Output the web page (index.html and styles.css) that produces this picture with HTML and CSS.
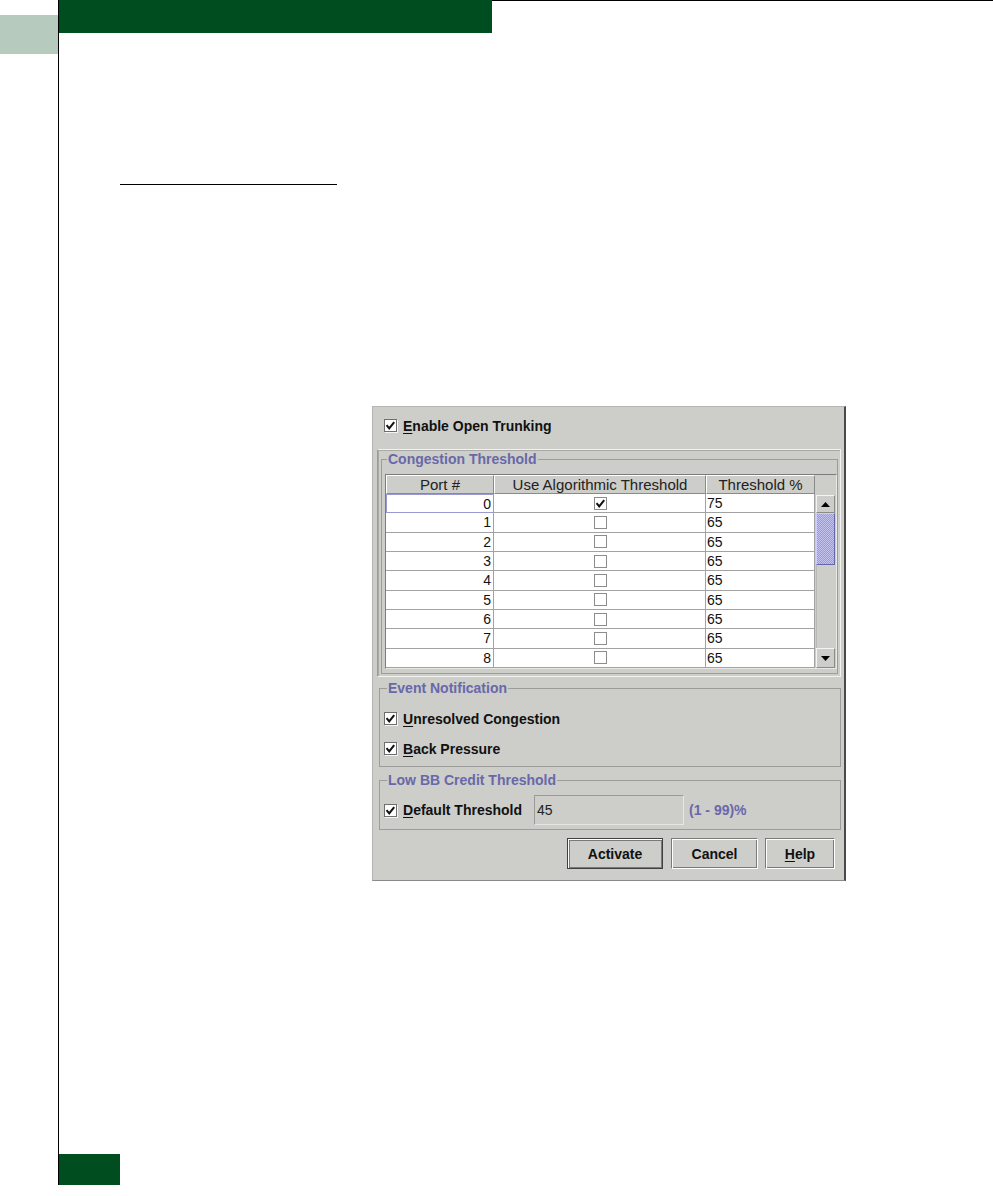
FILE: index.html
```html
<!DOCTYPE html>
<html>
<head>
<meta charset="utf-8">
<title>Open Trunking</title>
<link rel="stylesheet" href="styles.css">
</head>
<body>
<div class="page">
  <div class="gutter"><div class="tab"></div></div>
  <div class="main">
    <div class="top">
      <div class="greenbar"></div>
      <div class="toprule"></div>
    </div>
    <div class="heading-rule"></div>

    <div class="dlg">
      <div class="enable-row">
        <span class="cb"><svg viewBox="0 0 11 11" class="chk"><path d="M2.2 6 L4.2 8.4 L8.6 2.8"/></svg></span>
        <span class="lbl"><u>E</u>nable Open Trunking</span>
      </div>

      <div class="cong-panel">
        <fieldset class="grp cong">
          <legend>Congestion Threshold</legend>
          <div class="pane">
            <div class="thead">
              <div class="th c1">Port #</div>
              <div class="th c2">Use Algorithmic Threshold</div>
              <div class="th c3">Threshold %</div>
              <div class="th-fill"></div>
            </div>
            <div class="tbody-wrap">
              <div class="tbody">
                <div class="tr"><div class="td c1 num focus">0</div><div class="td c2 mid"><span class="cb small"><svg viewBox="0 0 11 11" class="chk"><path d="M2.2 6 L4.2 8.4 L8.6 2.8"/></svg></span></div><div class="td c3">75</div></div>
                <div class="tr"><div class="td c1 num">1</div><div class="td c2 mid"><span class="cb small"></span></div><div class="td c3">65</div></div>
                <div class="tr"><div class="td c1 num">2</div><div class="td c2 mid"><span class="cb small"></span></div><div class="td c3">65</div></div>
                <div class="tr"><div class="td c1 num">3</div><div class="td c2 mid"><span class="cb small"></span></div><div class="td c3">65</div></div>
                <div class="tr"><div class="td c1 num">4</div><div class="td c2 mid"><span class="cb small"></span></div><div class="td c3">65</div></div>
                <div class="tr"><div class="td c1 num">5</div><div class="td c2 mid"><span class="cb small"></span></div><div class="td c3">65</div></div>
                <div class="tr"><div class="td c1 num">6</div><div class="td c2 mid"><span class="cb small"></span></div><div class="td c3">65</div></div>
                <div class="tr"><div class="td c1 num">7</div><div class="td c2 mid"><span class="cb small"></span></div><div class="td c3">65</div></div>
                <div class="tr"><div class="td c1 num">8</div><div class="td c2 mid"><span class="cb small"></span></div><div class="td c3">65</div></div>
              </div>
              <div class="sbar">
                <div class="sbtn"><svg viewBox="0 0 9 5" class="arr"><polygon points="0,5 9,5 4.5,0"/></svg></div>
                <div class="thumb"></div>
                <div class="track"></div>
                <div class="sbtn down"><svg viewBox="0 0 9 5" class="arr"><polygon points="0,0 9,0 4.5,5"/></svg></div>
              </div>
            </div>
          </div>
        </fieldset>
      </div>

      <fieldset class="grp event">
        <legend>Event Notification</legend>
        <div class="check-row">
          <span class="cb"><svg viewBox="0 0 11 11" class="chk"><path d="M2.2 6 L4.2 8.4 L8.6 2.8"/></svg></span>
          <span class="lbl"><u>U</u>nresolved Congestion</span>
        </div>
        <div class="check-row second">
          <span class="cb"><svg viewBox="0 0 11 11" class="chk"><path d="M2.2 6 L4.2 8.4 L8.6 2.8"/></svg></span>
          <span class="lbl"><u>B</u>ack Pressure</span>
        </div>
      </fieldset>

      <fieldset class="grp lowbb">
        <legend>Low BB Credit Threshold</legend>
        <div class="bb-row">
          <span class="cb"><svg viewBox="0 0 11 11" class="chk"><path d="M2.2 6 L4.2 8.4 L8.6 2.8"/></svg></span>
          <span class="lbl"><u>D</u>efault Threshold</span>
          <div class="field">45</div>
          <span class="range">(1 - 99)%</span>
        </div>
      </fieldset>

      <div class="buttons">
        <div class="btn default">Activate</div>
        <div class="btn cancel">Cancel</div>
        <div class="btn help"><u>H</u>elp</div>
      </div>
    </div>

    <div class="foot-block"></div>
  </div>
</div>
</body>
</html>
```

FILE: styles.css
```css
* { box-sizing: border-box; }

html, body {
  margin: 0;
  padding: 0;
  background: #ffffff;
}

body {
  font-family: "Liberation Sans", Arial, sans-serif;
  color: #111;
}

.page {
  display: flex;
  width: 993px;
  height: 1196px;
}

.gutter {
  width: 58px;
  flex: none;
}

.tab {
  margin-top: 15px;
  height: 39px;
  background: #b6cbbe;
}

.main {
  width: 935px;
  height: 1185px;
  border-left: 1px solid #000;
  display: flex;
  flex-direction: column;
}

.top {
  display: flex;
  height: 33px;
  flex: none;
}

.greenbar {
  width: 433px;
  background: #004d20;
}

.toprule {
  flex: 1;
  border-top: 1px solid #000;
}

.heading-rule {
  margin: 151px 0 0 61px;
  width: 217px;
  height: 1px;
  background: #000;
  flex: none;
}

/* ---------- dialog ---------- */
.dlg {
  margin: 221px 0 0 313px;
  width: 474px;
  height: 475px;
  flex: none;
  background: #cdcdc9;
  border-left: 1px solid #b4b4b0;
  border-top: 1px solid #b4b4b0;
  border-right: 2px solid #4a4a4a;
  border-bottom: 1px solid #8a8a8a;
  display: flex;
  flex-direction: column;
}

.lbl {
  font-weight: bold;
  font-size: 14px;
  line-height: 14px;
  color: #111;
  white-space: nowrap;
}

.lbl u, .btn u {
  text-decoration: underline;
  text-underline-offset: 2px;
}

.cb {
  width: 13px;
  height: 13px;
  flex: none;
  background: #fff;
  border: 1px solid #6e6e6e;
  box-shadow: 1px 1px 0 #f4f4f4;
  display: flex;
  align-items: center;
  justify-content: center;
}

.cb.small {
  border-color: #8c8c8c;
  box-shadow: none;
}

.chk {
  width: 11px;
  height: 11px;
  display: block;
}

.chk path {
  fill: none;
  stroke: #111;
  stroke-width: 2;
  stroke-linecap: square;
}

.enable-row {
  margin: 12px 0 0 11px;
  height: 13px;
  display: flex;
  align-items: center;
  gap: 6px;
}

.cong-panel {
  margin: 17px 0 0 4px;
  width: 464px;
  height: 228px;
  flex: none;
  border: 1px solid;
  border-color: #f2f2f0 #f2f2f0 #f2f2f0 #9a9a98;
  box-shadow: inset 1px 1px 0 #a8a8a6;
}

.grp {
  margin: 0;
  padding: 0;
  border: 1px solid #9c9c9a;
  min-width: 0;
}

.grp legend {
  margin-left: 5px;
  padding: 0 1px;
  font-size: 14px;
  line-height: 14px;
  font-weight: bold;
  color: #6868aa;
}

.event legend, .lowbb legend {
  margin-left: 3px;
}

.cong {
  margin: 2px 0 0 3px;
  width: 457px;
  height: 222px;
}

.pane {
  margin: 8px 0 0 3px;
  width: 452px;
  height: 195px;
  border: 1px solid;
  border-color: #7c7c7c #e8e8e6 #e8e8e6 #7c7c7c;
  display: flex;
  flex-direction: column;
}

.thead {
  display: flex;
  height: 19px;
  flex: none;
}

.th {
  height: 19px;
  font-size: 15px;
  line-height: 17px;
  text-align: center;
  color: #222;
  background: #cdcdc9;
  border: 1px solid;
  border-color: #ffffff #8a8a88 #8a8a88 #ffffff;
  white-space: nowrap;
}

.c1 { width: 108px; flex: none; }
.c2 { width: 212px; flex: none; }
.c3 { width: 109px; flex: none; }

.th-fill { flex: 1; }

.tbody-wrap {
  display: flex;
  height: 174px;
  flex: none;
}

.tbody {
  width: 429px;
  flex: none;
  background: #fff;
}

.tr {
  display: flex;
  height: 19.33px;
}

.td {
  height: 100%;
  border-right: 1px solid #a2a2a2;
  border-bottom: 1px solid #a2a2a2;
  font-size: 14px;
  line-height: 18px;
  color: #111;
  padding: 0 1px;
  background: #fff;
}

.td.num {
  text-align: right;
  padding-right: 2px;
}

.td.focus {
  border: 1px solid #9a9ad2;
}

.td.mid {
  display: flex;
  align-items: center;
  justify-content: center;
  padding-left: 2px;
}

.sbar {
  flex: 1;
  display: flex;
  flex-direction: column;
  padding: 1px 1px 0 1px;
  background: #cdcdc9;
}

.sbtn {
  height: 18px;
  flex: none;
  border: 1px solid;
  border-color: #f4f4f2 #8a8a88 #8a8a88 #f4f4f2;
  display: flex;
  align-items: center;
  justify-content: center;
}

.sbtn.down {
  height: 20px;
}

.arr {
  width: 9px;
  height: 5px;
  display: block;
}

.arr polygon {
  fill: #000;
}

.thumb {
  height: 52px;
  flex: none;
  border: 1px solid;
  border-color: #ccccff #6666aa #6666aa #ccccff;
  background: repeating-conic-gradient(#c4c4ee 0 25%, #9a9ad0 0 50%) 0 0 / 2px 2px;
}

.track {
  flex: 1;
  border-left: 1px solid #b8b8b6;
}

/* event notification */
.event {
  margin: 4px 0 0 6px;
  width: 462px;
  height: 86px;
  padding: 17px 0 0 4px;
}

.check-row {
  display: flex;
  align-items: center;
  gap: 6px;
  height: 13px;
}

.check-row.second {
  margin-top: 17px;
}

/* low bb */
.lowbb {
  margin: 6px 0 0 6px;
  width: 462px;
  height: 57px;
  padding: 8px 0 0 4px;
}

.bb-row {
  display: flex;
  align-items: center;
  height: 30px;
}

.bb-row .lbl {
  margin-left: 6px;
  width: 131px;
}

.field {
  width: 150px;
  height: 30px;
  border: 1px solid;
  border-color: #9a9a98 #e6e6e4 #e6e6e4 #9a9a98;
  font-size: 14px;
  line-height: 28px;
  padding-left: 2px;
  color: #222;
}

.range {
  margin-left: 5px;
  font-size: 14px;
  font-weight: bold;
  color: #6868aa;
}

/* buttons */
.buttons {
  margin-top: 8px;
  display: flex;
  justify-content: flex-end;
  padding-right: 9px;
  height: 31px;
  flex: none;
}

.btn {
  height: 31px;
  font-size: 14px;
  font-weight: bold;
  color: #111;
  display: flex;
  align-items: center;
  justify-content: center;
  border: 1px solid;
  border-color: #7a7a78 #ffffff #ffffff #7a7a78;
  box-shadow: inset 1px 1px 0 #ffffff, inset -1px -1px 0 #7a7a78;
}

.btn.default {
  width: 96px;
  border-color: #404040;
  box-shadow: inset 1px 1px 0 #ffffff, inset -1px -1px 0 #7a7a78, inset 2px 2px 0 #7a7a78;
}

.btn.cancel {
  width: 87px;
  margin-left: 8px;
}

.btn.help {
  width: 70px;
  margin-left: 7px;
}

.foot-block {
  margin-top: auto;
  width: 61px;
  height: 31px;
  background: #004d20;
  flex: none;
}
```
